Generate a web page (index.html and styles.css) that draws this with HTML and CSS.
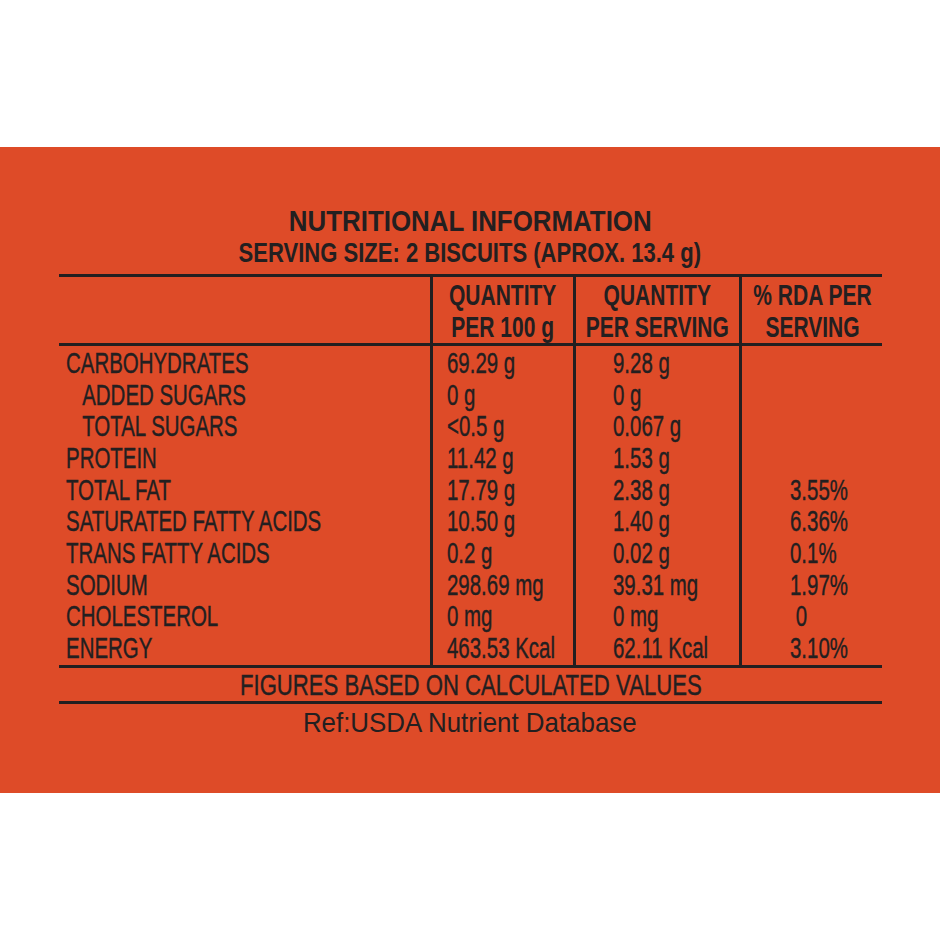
FILE: index.html
```html
<!DOCTYPE html>
<html lang="en">
<head>
<meta charset="utf-8">
<title>Nutritional Information</title>
<link rel="stylesheet" href="styles.css">
</head>
<body>
<div class="page">
  <section class="panel">
    <h1 class="title"><span class="sx sx-title">NUTRITIONAL INFORMATION</span></h1>
    <p class="serving"><span class="sx sx-serving">SERVING SIZE: 2 BISCUITS (APROX. 13.4 g)</span></p>

    <div class="facts">
      <div class="hcell col-a"></div>
      <div class="hcell col-b"><span class="sx sx-head">QUANTITY<br>PER 100 g</span></div>
      <div class="hcell col-c"><span class="sx sx-head">QUANTITY<br>PER SERVING</span></div>
      <div class="hcell col-d"><span class="sx sx-head">% RDA PER<br>SERVING</span></div>

      <div class="bcell col-a pad-a">
        <div class="lines">
          <div>CARBOHYDRATES</div>
          <div class="indent">ADDED SUGARS</div>
          <div class="indent">TOTAL SUGARS</div>
          <div>PROTEIN</div>
          <div>TOTAL FAT</div>
          <div>SATURATED FATTY ACIDS</div>
          <div>TRANS FATTY ACIDS</div>
          <div>SODIUM</div>
          <div>CHOLESTEROL</div>
          <div>ENERGY</div>
        </div>
      </div>
      <div class="bcell col-b pad-b">
        <div class="lines">
          <div>69.29 g</div>
          <div>0 g</div>
          <div>&lt;0.5 g</div>
          <div>11.42 g</div>
          <div>17.79 g</div>
          <div>10.50 g</div>
          <div>0.2 g</div>
          <div>298.69 mg</div>
          <div>0 mg</div>
          <div>463.53 Kcal</div>
        </div>
      </div>
      <div class="bcell col-c pad-c">
        <div class="lines">
          <div>9.28 g</div>
          <div>0 g</div>
          <div>0.067 g</div>
          <div>1.53 g</div>
          <div>2.38 g</div>
          <div>1.40 g</div>
          <div>0.02 g</div>
          <div>39.31 mg</div>
          <div>0 mg</div>
          <div>62.11 Kcal</div>
        </div>
      </div>
      <div class="bcell col-d pad-d">
        <div class="lines">
          <div>&nbsp;</div>
          <div>&nbsp;</div>
          <div>&nbsp;</div>
          <div>&nbsp;</div>
          <div>3.55%</div>
          <div>6.36%</div>
          <div>0.1%</div>
          <div>1.97%</div>
          <div>&nbsp;0</div>
          <div>3.10%</div>
        </div>
      </div>
    </div>

    <div class="note"><span class="sx sx-note">FIGURES BASED ON CALCULATED VALUES</span></div>
    <div class="ref"><span class="sx sx-ref">Ref:USDA Nutrient Database</span></div>
  </section>
</div>
</body>
</html>
```

FILE: styles.css
```css
html, body {
  margin: 0;
  padding: 0;
  background: #ffffff;
}

body {
  font-family: "Liberation Sans", Arial, sans-serif;
  color: #231f20;
}

.page {
  padding-top: 147px;
}

.panel {
  background: #de4b28;
  height: 646px;
  box-sizing: border-box;
  padding-top: 58px;
}

.sx {
  display: inline-block;
  white-space: nowrap;
  transform-origin: center top;
}

.title,
.serving,
.note,
.ref,
.hcell {
  display: flex;
  justify-content: center;
}

.title {
  margin: 0;
  font-size: 30px;
  line-height: 32px;
  font-weight: 700;
}

.sx-title { transform: scaleX(0.863); }

.serving {
  margin: 0;
  font-size: 28px;
  line-height: 32px;
  font-weight: 700;
}

.sx-serving { transform: scaleX(0.787); }

.facts {
  margin: 5px 0 0 59px;
  width: 823px;
  display: grid;
  grid-template-columns: 374px 143px 166px 140px;
  border-top: 3px solid #231f20;
  border-bottom: 3px solid #231f20;
}

.hcell,
.bcell {
  box-sizing: border-box;
  min-width: 0;
}

.col-a,
.col-b,
.col-c {
  border-right: 3px solid #231f20;
}

.hcell {
  padding-top: 2px;
  border-bottom: 3px solid #231f20;
  font-size: 30px;
  line-height: 32px;
  font-weight: 700;
  text-align: center;
}

.hcell.col-a {
  height: 69px;
}

.sx-head { transform: scaleX(0.70); }

.bcell {
  padding-top: 2px;
  font-size: 29px;
  line-height: 31.67px;
}

.lines {
  white-space: nowrap;
  transform: scaleX(0.705);
  transform-origin: left top;
  -webkit-text-stroke: 0.4px #231f20;
}

.indent {
  padding-left: 23px;
}

.pad-a { padding-left: 7px; }
.pad-b { padding-left: 14px; }
.pad-c { padding-left: 37px; }
.pad-d { padding-left: 48px; }

.note {
  margin-left: 59px;
  width: 823px;
  font-size: 30px;
  line-height: 33px;
  border-bottom: 3px solid #231f20;
  -webkit-text-stroke: 0.4px #231f20;
}

.sx-note { transform: scaleX(0.738); }

.ref {
  padding-top: 2px;
  font-size: 28.5px;
  line-height: 32px;
}

.sx-ref { transform: scaleX(0.908); }
```
